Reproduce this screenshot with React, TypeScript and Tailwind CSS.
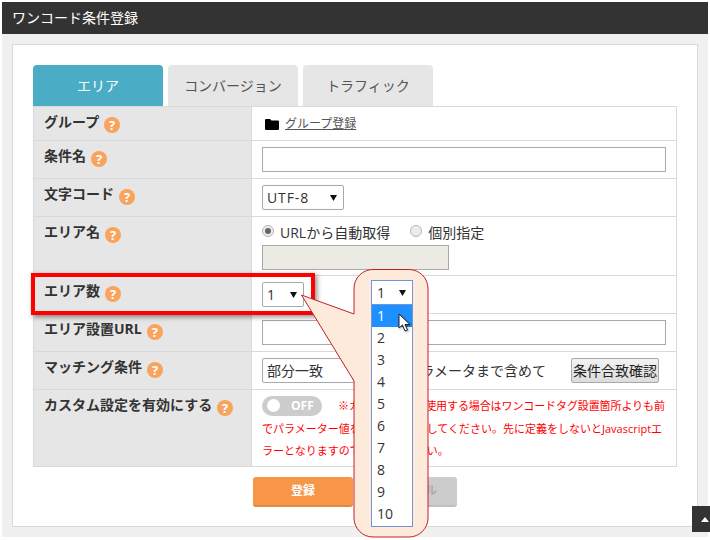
import React from "react";

const font = { fontFamily: '"Open Sans","Noto Sans CJK JP",sans-serif' };

function Help() {
  return (
    <span className="inline-flex items-center justify-center w-[16px] h-[16px] rounded-full bg-[#f9a45e] text-white text-[13px] font-bold leading-none ml-[5px] shrink-0">
      ?
    </span>
  );
}

function Arrow() {
  return (
    <svg width="7" height="6" viewBox="0 0 7 6">
      <path d="M0 0H7L3.5 6Z" fill="#111" />
    </svg>
  );
}

function Select({ label, w, wide }: { label: string; w: string; wide?: boolean }) {
  return (
    <div className={`${w} h-[25px] border border-[#a9a9a9] rounded-[2px] bg-white flex items-center justify-between pl-[4px] pr-[6px] text-[14px] text-[#333]`}>
      <span className={wide ? "tracking-[0.9px]" : ""}>{label}</span>
      <Arrow />
    </div>
  );
}

function Row({ h, label, last, children }: { h: string; label: string; last?: boolean; children: React.ReactNode }) {
  return (
    <div className={`flex ${h} ${last ? "" : "border-b border-[#d9d9d9]"}`}>
      <div className="w-[218px] shrink-0 bg-[#e6e6e6] border-r border-[#d9d9d9] pl-[10px] pt-[4px] flex items-start text-[14px] font-bold text-[#333] leading-[22px]">
        <span>{label}</span>
        <span className="h-[22px] flex items-center mt-[3px]"><Help /></span>
      </div>
      <div className="flex-1 pl-[10px] pr-[10px] pt-[6px] min-w-0">{children}</div>
    </div>
  );
}

function Input({ w }: { w: string }) {
  return <div className={`${w} h-[25px] border border-[#a9a9a9] bg-white`} />;
}

function Radio({ on }: { on?: boolean }) {
  return (
    <span className="inline-flex w-[12px] h-[12px] rounded-full border border-[#b5b5b5] bg-[#ececec] items-center justify-center shrink-0">
      {on && <span className="w-[6px] h-[6px] rounded-full bg-[#666]" />}
    </span>
  );
}

export default function App() {
  return (
    <div className="relative w-[710px] h-[540px] overflow-hidden bg-white pt-[2px] pl-[2px]" style={font}>
      <div className="w-[706px] h-[32px] bg-[#333333] text-white text-[14px] leading-[32px] pl-[10px]">ワンコード条件登録</div>
      <div className="w-[706px] h-[503px] bg-[#f0f0f0] pt-[10px] pl-[10px]">
        <div className="w-[686px] h-[483px] bg-white border border-[#d9d9d9] pt-[20px] pl-[20px]">
          <div className="flex gap-[5px] h-[41px]">
            <div className="w-[130px] rounded-t-[4px] bg-[#4bacc6] text-white text-[14px] flex items-center justify-center">エリア</div>
            <div className="w-[130px] rounded-t-[4px] bg-[#e6e6e6] text-[#555] text-[14px] flex items-center justify-center">コンバージョン</div>
            <div className="w-[130px] rounded-t-[4px] bg-[#e6e6e6] text-[#555] text-[14px] flex items-center justify-center">トラフィック</div>
          </div>
          <div className="w-[644px] border border-[#d9d9d9]">
            <Row h="h-[34px]" label="グループ">
              <div className="flex items-center h-[22px] text-[12px] text-[#555] pl-[3px]">
                <svg width="14" height="12" viewBox="0 0 14 12" className="mr-[6px]">
                  <path d="M0 2a1 1 0 0 1 1-1h4l1.5 1.5H13a1 1 0 0 1 1 1V11a1 1 0 0 1-1 1H1a1 1 0 0 1-1-1Z" fill="#000" />
                </svg>
                <span className="underline">グループ登録</span>
              </div>
            </Row>
            <Row h="h-[38px]" label="条件名"><Input w="w-[404px]" /></Row>
            <Row h="h-[38px]" label="文字コード"><Select label="UTF-8" w="w-[82px]" wide /></Row>
            <Row h="h-[59px]" label="エリア名">
              <div className="flex items-center h-[20px] text-[14px] text-[#333] -mt-[2px]">
                <Radio on />
                <span className="ml-[6px] pt-[2px]">URLから自動取得</span>
                <span className="ml-[20px]"><Radio /></span>
                <span className="ml-[6px] pt-[2px]">個別指定</span>
              </div>
              <div className="w-[187px] h-[25px] border border-[#a9a9a9] bg-[#ebebe4] mt-[4px]" />
            </Row>
            <Row h="h-[38px]" label="エリア数"><Select label="1" w="w-[42px]" /></Row>
            <Row h="h-[38px]" label="エリア設置URL"><Input w="w-[404px]" /></Row>
            <Row h="h-[38px]" label="マッチング条件">
              <div className="flex items-center text-[14px] text-[#333]">
                <Select label="部分一致" w="w-[124px]" />
                <span className="ml-[8px] w-[152px] text-right whitespace-nowrap">パラメータまで含めて</span>
                <div className="ml-[25px] w-[88px] h-[25px] border border-[#a9a9a9] rounded-[2px] bg-gradient-to-b from-[#f2f2f2] to-[#dcdcdc] text-[14px] text-[#222] flex items-center justify-center whitespace-nowrap">条件合致確認</div>
              </div>
            </Row>
            <Row h="h-[76px]" label="カスタム設定を有効にする" last>
              <div className="text-[11px] text-[#ff0000] leading-[21px] w-[404px] -mt-[1px]">
                <div className="flex items-center h-[21px]">
                  <div className="w-[60px] h-[20px] rounded-full bg-[#cccccc] flex items-center shrink-0 mr-[16px] pl-[5px]">
                    <span className="w-[13px] h-[13px] rounded-full bg-white" />
                    <span className="ml-[11px] text-white text-[12px] font-bold">OFF</span>
                  </div>
                  <span className="whitespace-nowrap tracking-[-0.1px]">※カスタム変数を使用する場合はワンコードタグ設置箇所よりも前</span>
                </div>
                <div className="whitespace-nowrap mt-[2px]">でパラメーター値を必ず先に定義してください。先に定義をしないとJavascriptエ</div>
                <div className="whitespace-nowrap mt-[1px]">ラーとなりますのでご注意ください。</div>
              </div>
            </Row>
          </div>
          <div className="flex justify-center gap-[4px] mt-[10px] w-[644px]">
            <div className="w-[100px] h-[30px] rounded-[3px] bg-[#f79646] border-b-2 border-[#e08a42] text-white text-[12px] font-bold flex items-center justify-center">登録</div>
            <div className="w-[100px] h-[30px] rounded-[3px] bg-[#cccccc] border-b-2 border-[#c0c0c0] text-[#aaaaaa] text-[12px] font-bold flex items-center justify-center">キャンセル</div>
          </div>
        </div>
      </div>

      {/* scroll-to-top button */}
      <div className="absolute left-[692px] top-[506px] w-[18px] h-[26px] bg-[#333333] flex items-center justify-end pr-[1px]">
        <svg width="8" height="5" viewBox="0 0 8 5"><path d="M0 5L4 0L8 5Z" fill="#fff" /></svg>
      </div>

      {/* red highlight */}
      <div className="absolute left-[31px] top-[273px] w-[284px] h-[42px] border-[4px] border-[#ff0000] shadow-[2px_2px_5px_rgba(0,0,0,0.45)]" />

      {/* callout */}
      <svg className="absolute left-0 top-0" width="710" height="540" viewBox="0 0 710 540">
        <path
          d="M374 269.5H409a19 19 0 0 1 19 19V518a19 19 0 0 1-19 19H373a19 19 0 0 1-19-19V381L301.5 295L354 314V289a19 19 0 0 1 20-19.5Z"
          fill="#fdeadb"
          stroke="#c0202a"
          strokeWidth="1"
        />
      </svg>

      {/* open dropdown */}
      <div className="absolute left-[371px] top-[280px] w-[42px] h-[247px] border border-[#6f94d8] bg-white text-[14px] text-[#333]">
        <div className="h-[24px] flex items-center justify-between pl-[5px] pr-[6px] border-b border-[#6f94d8]">
          <span>1</span>
          <Arrow />
        </div>
        <div className="h-[22px] bg-[#1e90ff] text-white pl-[5px] leading-[22px]">1</div>
        {[2, 3, 4, 5, 6, 7, 8, 9, 10].map((n) => (
          <div key={n} className="h-[22px] pl-[5px] leading-[22px]">{n}</div>
        ))}
      </div>

      {/* mouse pointer */}
      <svg className="absolute left-[398px] top-[313px]" width="16" height="20" viewBox="0 0 16 20" style={{ filter: "drop-shadow(1px 1px 1px rgba(0,0,0,0.35))" }}>
        <path d="M1 1V15L4.5 12L7 18L9.5 17L7 11.5H12Z" fill="#fff" stroke="#222" strokeWidth="1" strokeLinejoin="round" />
      </svg>
    </div>
  );
}
